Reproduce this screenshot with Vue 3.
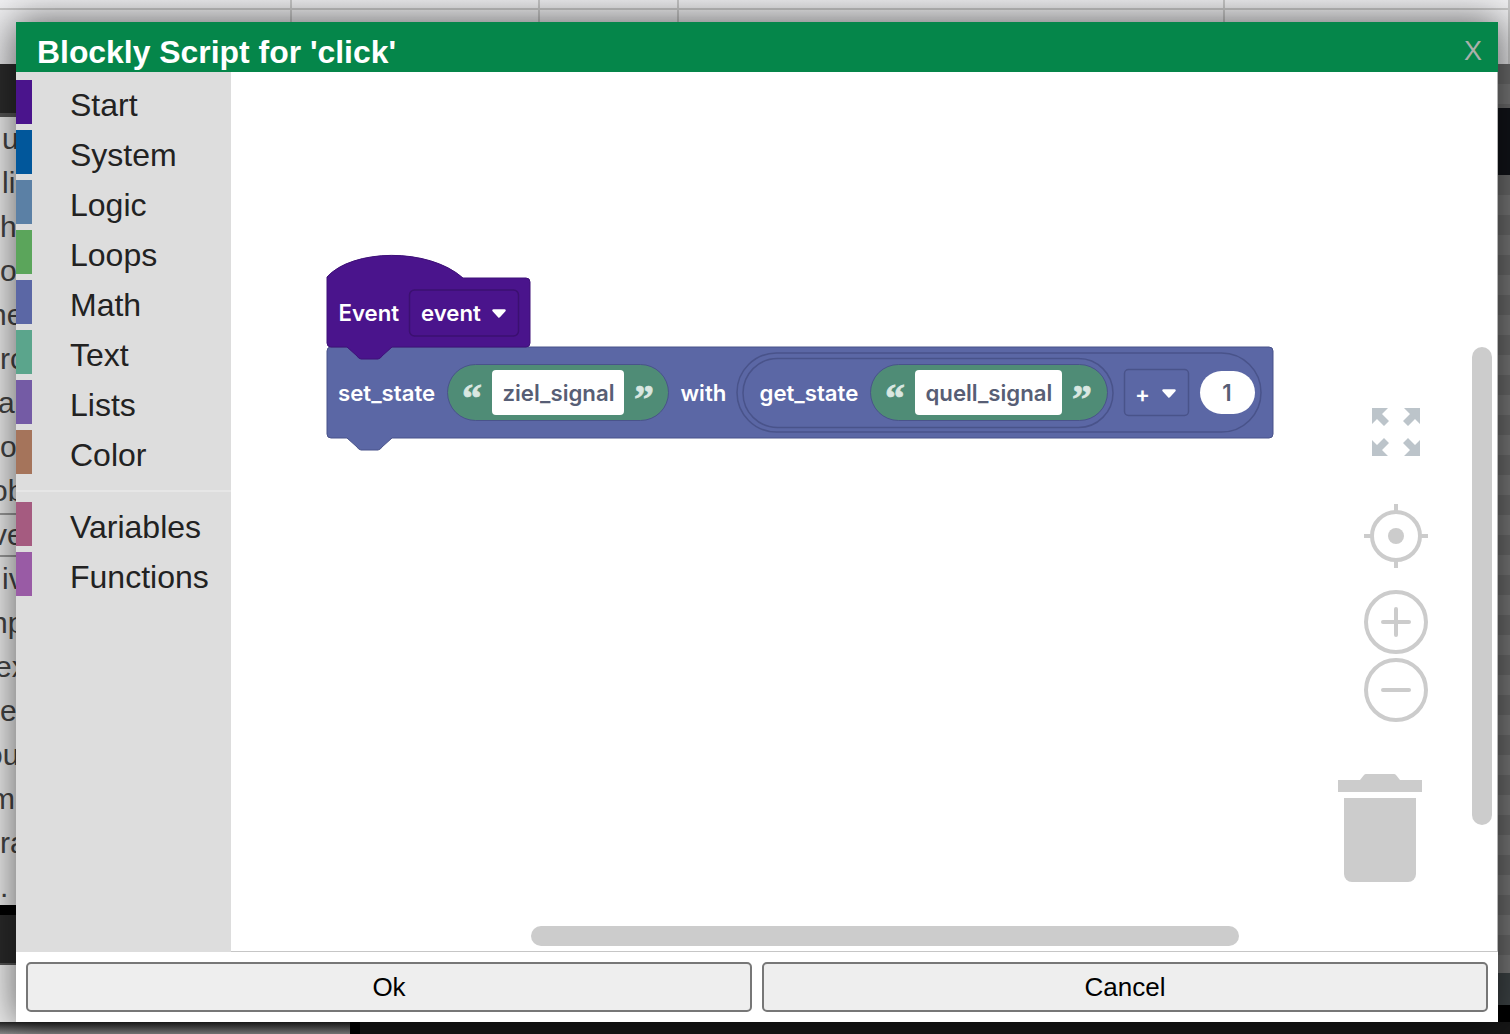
<script setup>
const categories = [
  { name: 'Start', color: '#4a148c' },
  { name: 'System', color: '#01579b' },
  { name: 'Logic', color: '#5b80a5' },
  { name: 'Loops', color: '#5ba55b' },
  { name: 'Math', color: '#5b67a5' },
  { name: 'Text', color: '#5ba58c' },
  { name: 'Lists', color: '#745ba5' },
  { name: 'Color', color: '#a5745b' },
]
const customCategories = [
  { name: 'Variables', color: '#a55b80' },
  { name: 'Functions', color: '#995ba5' },
]
const topCells = [292, 248, 139, 546, 285]
const clippedRows = [
  { text: 'u', shift: 2 },
  { text: 'lic', shift: 2 },
  { text: 'h', shift: 0 },
  { text: 'o', shift: 0 },
  { text: 'ne', shift: -10 },
  { text: 'rc', shift: 0 },
  { text: 'a', shift: -2 },
  { text: 'o', shift: 0 },
  { text: 'ob', shift: -9 },
  { text: 've', shift: -8, ruled: true },
  { text: 'iv', shift: 2 },
  { text: 'np', shift: -9 },
  { text: 'ex', shift: -5 },
  { text: 'e', shift: 0 },
  { text: 'ou', shift: -14 },
  { text: 'm', shift: -10 },
  { text: 'ra', shift: 0 },
  { text: '.', shift: 0 },
]
</script>

<template>
  <div class="page">
    <div class="backdrop">
      <div class="topbar">
        <div v-for="(w, i) in topCells" :key="i" class="topcell" :style="{ width: w + 'px' }"></div>
      </div>
      <div class="main">
        <div class="leftpane">
          <div class="darkbar"></div>
          <div class="list">
            <div v-for="(row, i) in clippedRows" :key="i" class="listrow" :class="{ ruled: row.ruled }">
              <span :style="{ marginLeft: row.shift + 'px' }">{{ row.text }}</span>
            </div>
          </div>
          <div class="blackbar"></div>
          <div class="darkbar2"></div>
          <div class="lightrest"></div>
          <div class="lightfoot"></div>
        </div>
        <div class="divider"></div>
        <div class="rightpane">
          <div class="checker short"></div>
          <div class="inkbar"></div>
          <div class="checker grow"></div>
          <div class="slate"></div>
          <div class="inkbar2"></div>
          <div class="nearblack"></div>
        </div>
      </div>
    </div>

    <section class="dialog">
      <header class="titlebar">
        <h1>Blockly Script for 'click'</h1>
        <span class="close">X</span>
      </header>

      <div class="body">
        <aside class="toolbox">
          <div v-for="c in categories" :key="c.name" class="cat">
            <i class="stripe" :style="{ background: c.color }"></i>
            <span>{{ c.name }}</span>
          </div>
          <div class="sep"></div>
          <div v-for="c in customCategories" :key="c.name" class="cat">
            <i class="stripe" :style="{ background: c.color }"></i>
            <span>{{ c.name }}</span>
          </div>
        </aside>

        <div class="workspace">
          <svg class="canvas" viewBox="231 72 1266 879" width="1266" height="879" xmlns="http://www.w3.org/2000/svg">
            <!-- set_state block -->
            <path class="b-math" d="M327 351a4 4 0 0 1 4-4H1269a4 4 0 0 1 4 4V434a4 4 0 0 1-4 4H392l-10 9a6 6 0 0 1-4 3H361a6 6 0 0 1-4-3l-10-9H331a4 4 0 0 1-4-4Z" />
            <text class="t-w" x="338" y="400.5">set_state</text>

            <rect class="p-green" x="447.5" y="364.5" width="221" height="56" rx="28" />
            <text class="quote" x="462" y="412">“</text>
            <rect class="input" x="492" y="370" width="132" height="45" rx="4" />
            <text class="t-d" x="502.5" y="400.5">ziel_signal</text>
            <text class="quote" x="634" y="412">”</text>

            <text class="t-w" x="680.5" y="400.5">with</text>

            <rect class="p-out" x="737" y="353" width="524" height="79" rx="39.5" />
            <rect class="p-out" x="743" y="358.5" width="370" height="69" rx="34.5" />
            <text class="t-w" x="759.5" y="400.5">get_state</text>

            <rect class="p-green" x="870.5" y="364.5" width="237" height="56" rx="28" />
            <text class="quote" x="885" y="412">“</text>
            <rect class="input" x="915" y="370" width="147" height="45" rx="4" />
            <text class="t-d" x="925.5" y="400.5">quell_signal</text>
            <text class="quote" x="1072" y="412">”</text>

            <rect class="dd-math" x="1124.5" y="369.5" width="64" height="46" rx="4" />
            <text class="t-w" x="1135" y="402">+</text>
            <path class="tri" d="M1163.5 390.5h11l-5.5 6Z" />

            <rect class="num" x="1200" y="371" width="55" height="43" rx="21.5" />
            <text class="t-n" x="1227" y="400.5" text-anchor="middle">1</text>

            <!-- event hat block -->
            <path class="b-event" d="M327 277C352 249 428 247 463 278H526a4 4 0 0 1 4 4V343a4 4 0 0 1-4 4H392l-10 9a6 6 0 0 1-4 3H361a6 6 0 0 1-4-3l-10-9H331a4 4 0 0 1-4-4Z" />
            <text class="t-w" x="338.5" y="320.5">Event</text>
            <rect class="dd-event" x="409.5" y="290" width="109" height="46" rx="5" />
            <text class="t-w" x="421" y="320.5">event</text>
            <path class="tri" d="M493.5 310.5h11l-5.5 6Z" />

            <!-- zoom-to-fit -->
            <g class="fit">
              <path d="M1372 408H1388L1382 414L1389 421L1384 426L1377 419L1372 424Z" />
              <path d="M1420 408H1404L1410 414L1403 421L1408 426L1415 419L1420 424Z" />
              <path d="M1372 456H1388L1382 450L1389 443L1384 438L1377 445L1372 440Z" />
              <path d="M1420 456H1404L1410 450L1403 443L1408 438L1415 445L1420 440Z" />
            </g>

            <!-- centre -->
            <g class="ctl">
              <circle cx="1396" cy="536" r="24" />
              <path class="ticks" d="M1396 504V512M1396 560V568M1364 536H1372M1420 536H1428" />
            </g>
            <circle class="solid" cx="1396" cy="536" r="8" />

            <!-- zoom in / out -->
            <g class="ctl">
              <circle cx="1396" cy="622" r="30" />
              <path d="M1383 622H1409M1396 609V635" />
              <circle cx="1396" cy="690" r="30" />
              <path d="M1383 690H1409" />
            </g>

            <!-- trash -->
            <path class="solid" d="M1338 780H1360L1364 775a3 3 0 0 1 2-1H1394a3 3 0 0 1 2 1L1400 780H1422V792H1338Z" />
            <path class="solid" d="M1344 798H1416V874a8 8 0 0 1-8 8H1352a8 8 0 0 1-8-8Z" />
          </svg>
          <div class="scroll-v"></div>
          <div class="scroll-h"></div>
        </div>
      </div>

      <footer class="actions">
        <button class="btn" type="button">Ok</button>
        <button class="btn" type="button">Cancel</button>
      </footer>
    </section>
  </div>
</template>

<style scoped>
.page {
  position: relative;
  width: 1510px;
  height: 1034px;
  overflow: hidden;
  font-family: "Liberation Sans", Arial, sans-serif;
  background: #eee;
}

/* page behind the dialog */
.backdrop { display: flex; flex-direction: column; height: 100%; }
.topbar { display: flex; height: 64px; flex: none; background: linear-gradient(#f1f1f3, #e4e4e6); }
.topcell { height: 64px; border-right: 2px solid #c8c8c8; box-sizing: border-box; }
.topcell::after { content: ""; display: block; height: 8px; border-bottom: 2px solid #c8c8c8; }
.main { flex: 1; display: flex; min-height: 0; }
.leftpane { width: 350px; flex: none; display: flex; flex-direction: column; }
.darkbar { height: 53px; flex: none; background: #2b2b2b; border-bottom: 4px solid #555; box-sizing: border-box; }
.list { height: 788px; flex: none; overflow: hidden; background: #ececec; box-sizing: border-box; }
.listrow {
  height: 44px;
  overflow: hidden;
  font-size: 30px;
  line-height: 44px;
  color: #444;
  white-space: nowrap;
}
.listrow span { display: inline-block; }
.listrow.ruled { border-top: 2px solid #999; border-bottom: 2px solid #999; box-sizing: border-box; line-height: 40px; }
.blackbar { height: 10px; flex: none; background: #000; }
.darkbar2 { height: 50px; flex: none; background: #2a2a2a; border-bottom: 2px solid #555; box-sizing: border-box; }
.lightrest { flex: 1; background: #eee; }
.lightfoot { height: 12px; flex: none; background: linear-gradient(#242424, #8a8a8a); }
.divider { width: 10px; flex: none; background: #000; }
.rightpane { flex: 1; display: flex; flex-direction: column; min-width: 0; }
.checker { background: repeating-linear-gradient(#6a6a6a 0 20px, #777 20px 40px); }
.checker.short { height: 44px; flex: none; }
.checker.grow { flex: 1; }
.inkbar { height: 67px; flex: none; background: #111318; }
.slate { height: 32px; flex: none; background: #3c4244; }
.inkbar2 { height: 17px; flex: none; background: #000; }
.nearblack { height: 12px; flex: none; background: #171717; }

/* dialog */
.dialog {
  position: absolute;
  left: 16px;
  top: 22px;
  width: 1482px;
  height: 1000px;
  display: flex;
  flex-direction: column;
  background: #fff;
  box-shadow: 0 0 36px 2px rgba(0, 0, 0, .58);
}
.titlebar {
  height: 50px;
  flex: none;
  display: flex;
  align-items: center;
  justify-content: space-between;
  padding: 0 16px 0 21px;
  background: #05864a;
  box-sizing: border-box;
}
.titlebar h1 {
  margin: 9px 0 0;
  font-size: 31.9px;
  line-height: 50px;
  font-weight: 700;
  color: #fff;
}
.close { margin-top: 8px; font-size: 27px; color: #a9b0ab; line-height: 50px; }

.body { flex: 1; display: flex; min-height: 0; height: 879px; }
.toolbox {
  width: 215px;
  flex: none;
  padding-top: 8px;
  box-sizing: border-box;
  background: #ddd;
}
.cat {
  height: 44px;
  margin-bottom: 6px;
  display: flex;
  align-items: center;
  font-size: 32px;
  color: #222;
}
.cat span { margin-left: 38px; padding-top: 6px; }
.stripe { width: 16px; height: 44px; flex: none; }
.sep { height: 2px; margin: 16px 0 10px; background: #e6e6e6; }

.workspace {
  position: relative;
  flex: 1;
  min-width: 0;
  background: #fff;
  border-right: 1px solid #b4b4b4;
  border-bottom: 1px solid #c6c6c6;
}
.canvas { position: absolute; left: 0; top: 0; display: block; }
.scroll-v {
  position: absolute;
  left: 1241px;
  top: 275px;
  width: 20px;
  height: 478px;
  border-radius: 10px;
  background: #ccc;
}
.scroll-h {
  position: absolute;
  left: 300px;
  top: 854px;
  width: 708px;
  height: 20px;
  border-radius: 10px;
  background: #ccc;
}

/* svg parts */
.b-math { fill: #5b67a5; stroke: #49538a; stroke-width: 1; }
.b-event { fill: #4a148c; stroke: #3e1178; stroke-width: 1; }
.p-green { fill: #4f8c76; stroke: #49538a; stroke-width: 1; }
.p-out { fill: #5b67a5; stroke: #49538a; stroke-width: 1.5; }
.input, .num { fill: #fff; }
.dd-math { fill: #5b67a5; stroke: #49538a; stroke-width: 1.5; }
.dd-event { fill: #4a148c; stroke: #3b1070; stroke-width: 1.5; }
.tri { fill: #fff; stroke: #fff; stroke-width: 2.5; stroke-linejoin: round; }
.t-w, .t-d, .t-n {
  font-family: Inter, "Liberation Sans", sans-serif;
  font-size: 22.2px;
  font-weight: 600;
}
.t-w { fill: #fff; }
.t-d, .t-n { fill: #575e75; }
.quote {
  font-family: "Liberation Serif", serif;
  font-weight: 700;
  font-size: 40px;
  fill: #d9e7e1;
  stroke: #d9e7e1;
  stroke-width: .7;
}
.fit path { fill: #bcc4ca; }
.ctl { fill: none; stroke: #ccc; stroke-width: 4; stroke-linecap: round; }
.ticks { stroke-linecap: butt; }
.solid { fill: #ccc; }

/* footer */
.actions {
  height: 70px;
  flex: none;
  display: flex;
  gap: 10px;
  padding: 10px 10px 10px;
  box-sizing: border-box;
  background: #fff;
}
.btn {
  flex: 1;
  height: 50px;
  padding: 0;
  font-family: "Liberation Sans", Arial, sans-serif;
  font-size: 26px;
  color: #000;
  background: #eee;
  border: 2px solid #777;
  border-radius: 5px;
}
</style>
